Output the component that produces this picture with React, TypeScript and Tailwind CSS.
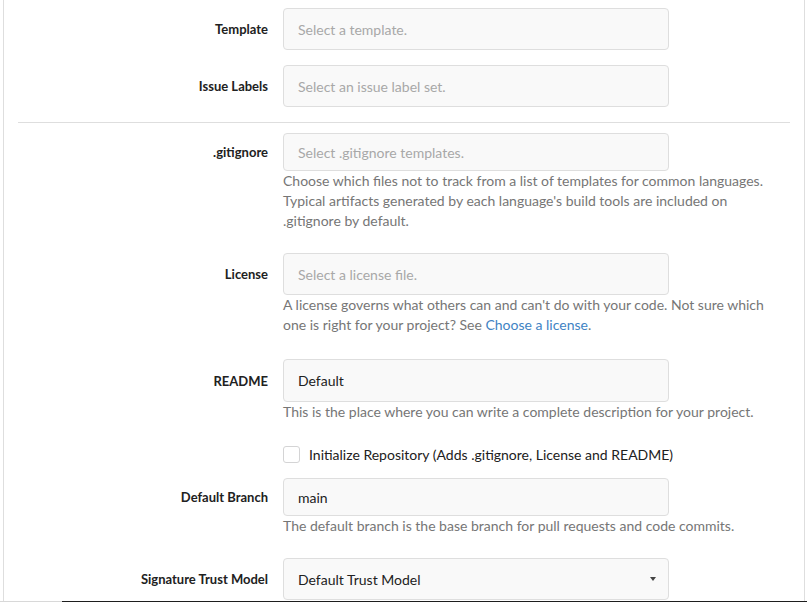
import React from "react";

const font = { fontFamily: 'Lato, "Noto Sans", sans-serif' };

const Label = ({ children }: { children: React.ReactNode }) => (
  <div className="w-[279px] shrink-0 pr-[15px] text-right text-[13px] font-bold text-[#212121] leading-[20px]">
    {children}
  </div>
);

const Field = ({
  label,
  value,
  placeholder,
  h = "h-[42px]",
  caret,
}: {
  label: string;
  value?: string;
  placeholder?: string;
  h?: string;
  caret?: boolean;
}) => (
  <div className="flex items-center">
    <Label>{label}</Label>
    <div
      className={`${h} w-[386px] rounded-[4px] border border-[#dedede] bg-[#f9f9f9] pl-[14px] pr-[12px] flex items-center justify-between text-[14px]`}
    >
      {value ? (
        <span className="text-[#212121]">{value}</span>
      ) : (
        <span className="text-[#a8a8a8]">{placeholder}</span>
      )}
      {caret && (
        <span className="w-0 h-0 border-l-[3.5px] border-r-[3.5px] border-t-[4px] border-l-transparent border-r-transparent border-t-[#444]" />
      )}
    </div>
  </div>
);

const Help = ({ children }: { children: React.ReactNode }) => (
  <div className="ml-[279px] w-[500px] text-[14px] leading-[20px] text-[#767676]">
    {children}
  </div>
);

export default function App() {
  return (
    <div className="w-[807px] h-[602px] bg-white overflow-hidden" style={font}>
      <div className="ml-[3px] w-[802px] h-[601px] border-x border-[#dedede] pt-[8px]">
        <Field label="Template" placeholder="Select a template." />
        <div className="mt-[15px]">
          <Field label="Issue Labels" placeholder="Select an issue label set." />
        </div>
        <div className="mx-[14px] mt-[15px] h-px bg-[#dedede]" />
        <div className="mt-[10px]">
          <Field label=".gitignore" placeholder="Select .gitignore templates." h="h-[38px]" />
        </div>
        <Help>
          Choose which files not to track from a list of templates for common languages.
          Typical artifacts generated by each language's build tools are included on
          .gitignore by default.
        </Help>
        <div className="mt-[22px]">
          <Field label="License" placeholder="Select a license file." />
        </div>
        <Help>
          A license governs what others can and can't do with your code. Not sure which
          one is right for your project? See{" "}
          <a className="text-[#4183c4]">Choose a license</a>.
        </Help>
        <div className="mt-[24px]">
          <Field label="README" value="Default" h="h-[43px]" />
        </div>
        <Help>This is the place where you can write a complete description for your project.</Help>
        <div className="ml-[279px] mt-[24px] flex items-center gap-[9px] h-[17px]">
          <span className="w-[17px] h-[17px] rounded-[3px] border border-[#d4d4d5] bg-white" />
          <span className="text-[14px] text-[#212121]">
            Initialize Repository (Adds .gitignore, License and README)
          </span>
        </div>
        <div className="mt-[15px]">
          <Field label="Default Branch" value="main" h="h-[38px]" />
        </div>
        <Help>The default branch is the base branch for pull requests and code commits.</Help>
        <div className="mt-[22px]">
          <Field label="Signature Trust Model" value="Default Trust Model" caret />
        </div>
      </div>
      <div className="flex h-px">
        <div className="w-[62px] bg-[#d8d8d8]" />
        <div className="flex-1 bg-[#1e1e1e]" />
      </div>
    </div>
  );
}
